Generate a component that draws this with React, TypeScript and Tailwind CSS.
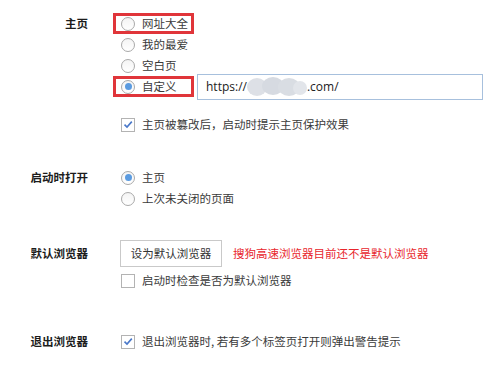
import React from 'react';

const cjk = { fontFamily: '"Noto Sans CJK SC", "Noto Sans", sans-serif' };

function Radio({ checked }: { checked?: boolean }) {
  return (
    <span className="flex h-[14px] w-[14px] shrink-0 items-center justify-center rounded-full border border-[#a9a9a9] bg-gradient-to-b from-[#f4f4f4] to-white">
      {checked && <span className="h-[7px] w-[7px] rounded-full bg-[#5b9be0]" />}
    </span>
  );
}

function Checkbox({ checked }: { checked?: boolean }) {
  return (
    <span className="flex h-[14px] w-[14px] shrink-0 items-center justify-center border border-[#b3b3b3] bg-white">
      {checked && (
        <svg width="10" height="9" viewBox="0 0 10 9">
          <path d="M1.5 4.6 L4 7 L8.8 1.6" fill="none" stroke="#4a78c9" strokeWidth="1.6" />
        </svg>
      )}
    </span>
  );
}

function Option({ label, checked, boxed, check }: { label: string; checked?: boolean; boxed?: boolean; check?: boolean }) {
  return (
    <div
      className={
        'flex h-[21px] items-center gap-[7px] pl-[8px] ' +
        (boxed ? 'w-[81px] shadow-[inset_0_0_0_3px_#e0353a]' : '')
      }
    >
      {check ? <Checkbox checked={checked} /> : <Radio checked={checked} />}
      <span className="text-[11.5px] leading-none text-[#3a3a3a]">{label}</span>
    </div>
  );
}

function Label({ text }: { text: string }) {
  return (
    <div className="flex h-[21px] w-[88px] shrink-0 items-center justify-end text-[11.5px] font-bold text-[#1c1c1c]">
      {text}
    </div>
  );
}

export default function App() {
  return (
    <div className="h-[368px] w-[500px] overflow-hidden bg-white pt-[13px]" style={cjk}>
      {/* 主页 */}
      <div className="flex gap-[25px]">
        <Label text="主页" />
        <div className="flex flex-col">
          <Option label="网址大全" boxed />
          <Option label="我的最爱" />
          <Option label="空白页" />
          <div className="flex h-[21px] items-center gap-[3px]">
            <Option label="自定义" checked boxed />
            <div className="flex h-[26px] w-[286px] items-center border border-[#a7c0dd] bg-white pl-[8px] text-[12px] text-[#222]" style={{ fontFamily: '"Open Sans", sans-serif' }}>
              <span>https://</span>
              <svg width="60" height="20" viewBox="0 0 60 20" className="shrink-0">
                <ellipse cx="10" cy="10" rx="10" ry="9" fill="#dde0e6" />
                <ellipse cx="26" cy="9" rx="11" ry="9" fill="#d6dae1" />
                <ellipse cx="42" cy="10" rx="11" ry="9" fill="#d9dde3" />
                <ellipse cx="53" cy="11" rx="7" ry="7" fill="#e2e5ea" />
              </svg>
              <span>.com/</span>
            </div>
          </div>
          <div className="mt-[17px]">
            <Option label="主页被篡改后，启动时提示主页保护效果" checked check />
          </div>
        </div>
      </div>

      {/* 启动时打开 */}
      <div className="mt-[32px] flex gap-[25px]">
        <Label text="启动时打开" />
        <div className="flex flex-col">
          <Option label="主页" checked />
          <Option label="上次未关闭的页面" />
        </div>
      </div>

      {/* 默认浏览器 */}
      <div className="mt-[31px] flex gap-[25px]">
        <div className="flex h-[27px] items-center">
          <Label text="默认浏览器" />
        </div>
        <div className="flex flex-col">
          <div className="flex items-center gap-[11px] pl-[7px]">
            <button className="flex h-[27px] w-[102px] items-center justify-center border border-[#c9c9c9] bg-white text-[11.5px] text-[#333]">
              设为默认浏览器
            </button>
            <span className="text-[11.5px] text-[#e8262d]">搜狗高速浏览器目前还不是默认浏览器</span>
          </div>
          <div className="mt-[3px]">
            <Option label="启动时检查是否为默认浏览器" check />
          </div>
        </div>
      </div>

      {/* 退出浏览器 */}
      <div className="mt-[40px] flex gap-[25px]">
        <Label text="退出浏览器" />
        <Option label="退出浏览器时, 若有多个标签页打开则弹出警告提示" checked check />
      </div>
    </div>
  );
}
